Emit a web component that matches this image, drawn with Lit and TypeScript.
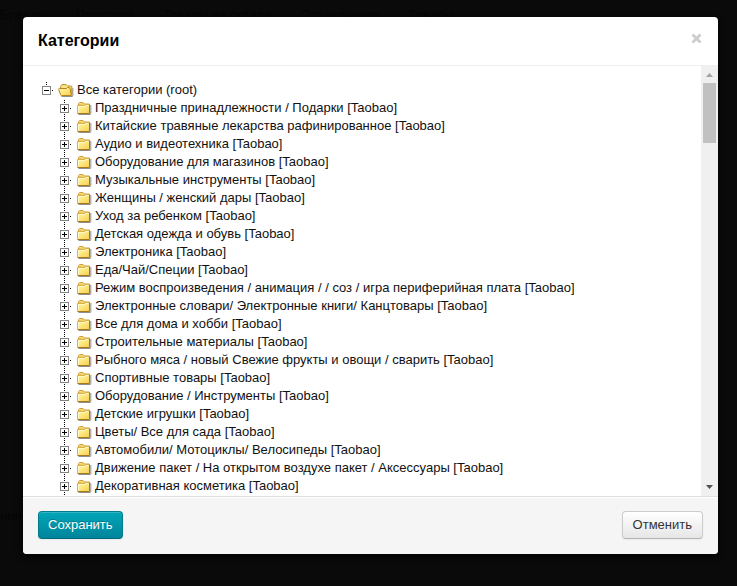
import { LitElement, html, css, svg } from "lit";
import { customElement, state } from "lit/decorators.js";

const CATEGORIES = [
  "Праздничные принадлежности / Подарки [Taobao]",
  "Китайские травяные лекарства рафинированное [Taobao]",
  "Аудио и видеотехника [Taobao]",
  "Оборудование для магазинов [Taobao]",
  "Музыкальные инструменты [Taobao]",
  "Женщины / женский дары [Taobao]",
  "Уход за ребенком [Taobao]",
  "Детская одежда и обувь [Taobao]",
  "Электроника [Taobao]",
  "Еда/Чай/Специи [Taobao]",
  "Режим воспроизведения / анимация / / соз / игра периферийная плата [Taobao]",
  "Электронные словари/ Электронные книги/ Канцтовары [Taobao]",
  "Все для дома и хобби [Taobao]",
  "Строительные материалы [Taobao]",
  "Рыбного мяса / новый Свежие фрукты и овощи / сварить [Taobao]",
  "Спортивные товары [Taobao]",
  "Оборудование / Инструменты [Taobao]",
  "Детские игрушки [Taobao]",
  "Цветы/ Все для сада [Taobao]",
  "Автомобили/ Мотоциклы/ Велосипеды [Taobao]",
  "Движение пакет / На открытом воздухе пакет / Аксессуары [Taobao]",
  "Декоративная косметика [Taobao]",
];

const gradient = svg`<defs><linearGradient id="g" x1="0" y1="0" x2="1" y2="1">
  <stop offset="0" stop-color="#fffbb0"/><stop offset="1" stop-color="#f8cf4c"/></linearGradient></defs>`;

const closedFolder = html`<svg class="icon" viewBox="0 0 16 16" aria-hidden="true">${gradient}
  <path d="M2.500 14.500h11.500q.8 0 .8-1V5" fill="none" stroke="#444" stroke-opacity=".6"/>
  <path d="M2.500 5V3.500l1-1H7l1 1.500h5.500V6Z" fill="#f6dc78" stroke="#cfa035"/>
  <path d="M1.500 5.500H8.500l1-1H13.500V13.500H2q-.5 0-.5-.5Z" fill="url(#g)"/>
  <path d="M1.500 13V5.500H8.500l1-1H13" fill="none" stroke="#dcb04a"/>
  <path d="M1.500 13.500H13.500V4.500" fill="none" stroke="#a87818"/>
  <path d="M2.500 12.500V6.500H9l1-1h2.500" fill="none" stroke="#fffbd0" stroke-opacity=".8"/></svg>`;

const openFolder = html`<svg class="icon" viewBox="0 0 16 16" aria-hidden="true">${gradient}
  <path d="M3.500 14.500h10.500q.8 0 .8-1V6" fill="none" stroke="#444" stroke-opacity=".6"/>
  <path d="M2.500 12.500V4.500l1.500-2h4L9.500 4H13q.8 0 .8 1v7.500Z" fill="#f7e28a" stroke="#c0901c"/>
  <path d="M.7 7.500q-.1-1 .8-1h7l1-1H11q.8 0 1 1l1.500 7H3.500q-.7 0-1-.8Z" fill="url(#g)" stroke="#b98519"/></svg>`;

const expander = (open: boolean, root: boolean) => html`<svg class="expander" viewBox="0 0 16 18" shape-rendering="crispEdges" aria-hidden="true">
  <path d="M7 1h1v1h-1zM7 3h1v1h-1zM13 9h1v1h-1z" fill="#000"/>
  ${root ? "" : svg`<path d="M7 15h1v1h-1zM7 17h1v1h-1z" fill="#000"/>`}
  <path d="M3.500 5.500h8v8h-8z" fill="#fff" stroke="#848484"/>
  <path d="M5 9h5v1h-5z" fill="#000"/>
  ${open ? "" : svg`<path d="M7 7h1v5h-1z" fill="#000"/>`}</svg>`;

@customElement("app-root")
export class AppRoot extends LitElement {
  @state() private expanded = true;

  static styles = css`
    :host {
      display: block;
      position: relative;
      box-sizing: border-box;
      height: 100vh;
      padding: 17px 19px 32px 23px;
      overflow: hidden;
      background: #0a0a0a;
      font: 13px/18px "Liberation Sans", Arial, sans-serif;
      color: #333;
    }
    .backdrop {
      position: absolute;
      inset: 0;
      color: #050507;
      font-size: 13px;
    }
    .tabs {
      display: flex;
      gap: 29px;
      padding-top: 6px;
      white-space: nowrap;
    }
    .caption {
      position: absolute;
      top: 507px;
      left: 0;
      font-size: 13px;
    }
    .modal {
      position: relative;
      display: flex;
      flex-direction: column;
      height: 100%;
      overflow: hidden;
      border-radius: 4px;
      background: #fff;
      box-shadow: 0 3px 7px #000;
    }
    .header {
      display: flex;
      justify-content: space-between;
      align-items: flex-start;
      padding: 12px 15px;
      border-bottom: 1px solid #eee;
    }
    h3 {
      margin: 0;
      font-size: 16px;
      line-height: 24px;
      color: #000;
    }
    button {
      font: inherit;
      cursor: pointer;
    }
    .close {
      display: block;
      margin-top: 3px;
      padding: 0;
      border: 0;
      background: none;
      line-height: 0;
    }
    .close svg {
      width: 13px;
      height: 13px;
    }
    .body {
      flex: 1;
      min-height: 0;
      display: flex;
    }
    .scroll {
      flex: 1;
      min-width: 0;
      overflow: auto;
      scrollbar-width: none;
      padding: 15px 16px 0;
    }
    ul {
      margin: 0;
      padding: 0;
      list-style: none;
    }
    ul ul {
      padding-left: 18px;
    }
    .node {
      display: flex;
      align-items: center;
      gap: 3px;
      height: 18px;
      padding: 0;
      border: 0;
      background: none;
      color: #111;
      white-space: nowrap;
    }
    .expander {
      width: 16px;
      height: 18px;
    }
    .icon {
      width: 16px;
      height: 16px;
    }
    .scrollbar {
      display: flex;
      flex-direction: column;
      width: 17px;
      background: #f0f0f0;
    }
    .scrollbar svg {
      width: 17px;
      height: 17px;
    }
    .track {
      flex: 1;
      padding: 0 2px;
    }
    .thumb {
      height: 60px;
      background: #c1c1c1;
    }
    .footer {
      display: flex;
      justify-content: space-between;
      padding: 14px 15px 15px;
      border-top: 1px solid #ddd;
      background: #f5f5f5;
      box-shadow: inset 0 1px 0 #fff;
    }
    .btn {
      height: 28px;
      padding: 0 10px;
      border: 1px solid #ccc;
      border-bottom-color: #b3b3b3;
      border-radius: 4px;
      background: linear-gradient(#fff, #e6e6e6);
      box-shadow: inset 0 1px 0 #fff, 0 1px 2px rgba(0, 0, 0, 0.05);
      color: #333;
    }
    .primary {
      padding: 0 9px;
      border-color: #007c8c;
      border-bottom-color: #00697c;
      background: linear-gradient(#00a5b8, #00859b);
      box-shadow: inset 0 1px 0 #33b5c3, 0 1px 2px rgba(0, 0, 0, 0.05);
      color: #fff;
      text-shadow: 0 -1px 0 rgba(0, 0, 0, 0.25);
    }
  `;

  render() {
    return html`
      <div class="backdrop" aria-hidden="true">
        <div class="tabs">
          <span>Бренды</span><span>Пристрой</span><span>Товары на складе</span><span>Ограничения</span><span>Товары</span>
        </div>
        <span class="caption">ния</span>
      </div>
      <section class="modal" role="dialog" aria-labelledby="title">
        <header class="header">
          <h3 id="title">Категории</h3>
          <button class="close" aria-label="Закрыть">
            <svg viewBox="0 0 13 13"><path d="M2.500 2.500l8 8M10.500 2.500l-8 8" stroke="#ccc" stroke-width="2.800"/></svg>
          </button>
        </header>
        <div class="body">
          <div class="scroll">
            <ul role="tree">
              <li role="treeitem" aria-expanded=${this.expanded}>
                <button class="node" @click=${() => (this.expanded = !this.expanded)}>
                  ${expander(this.expanded, true)}${openFolder}<span>Все категории (root)</span>
                </button>
                ${this.expanded
                  ? html`<ul role="group">
                      ${CATEGORIES.map(
                        (name) => html`<li role="treeitem">
                          <button class="node">${expander(false, false)}${closedFolder}<span>${name}</span></button>
                        </li>`
                      )}
                    </ul>`
                  : ""}
              </li>
            </ul>
          </div>
          <div class="scrollbar" aria-hidden="true">
            <svg viewBox="0 0 17 17"><path d="M5 11l3.500-4 3.500 4z" fill="#a3a3a3"/></svg>
            <div class="track"><div class="thumb"></div></div>
            <svg viewBox="0 0 17 17"><path d="M5 6l3.500 4L12 6z" fill="#505050"/></svg>
          </div>
        </div>
        <footer class="footer">
          <button class="btn primary">Сохранить</button>
          <button class="btn">Отменить</button>
        </footer>
      </section>
    `;
  }
}
